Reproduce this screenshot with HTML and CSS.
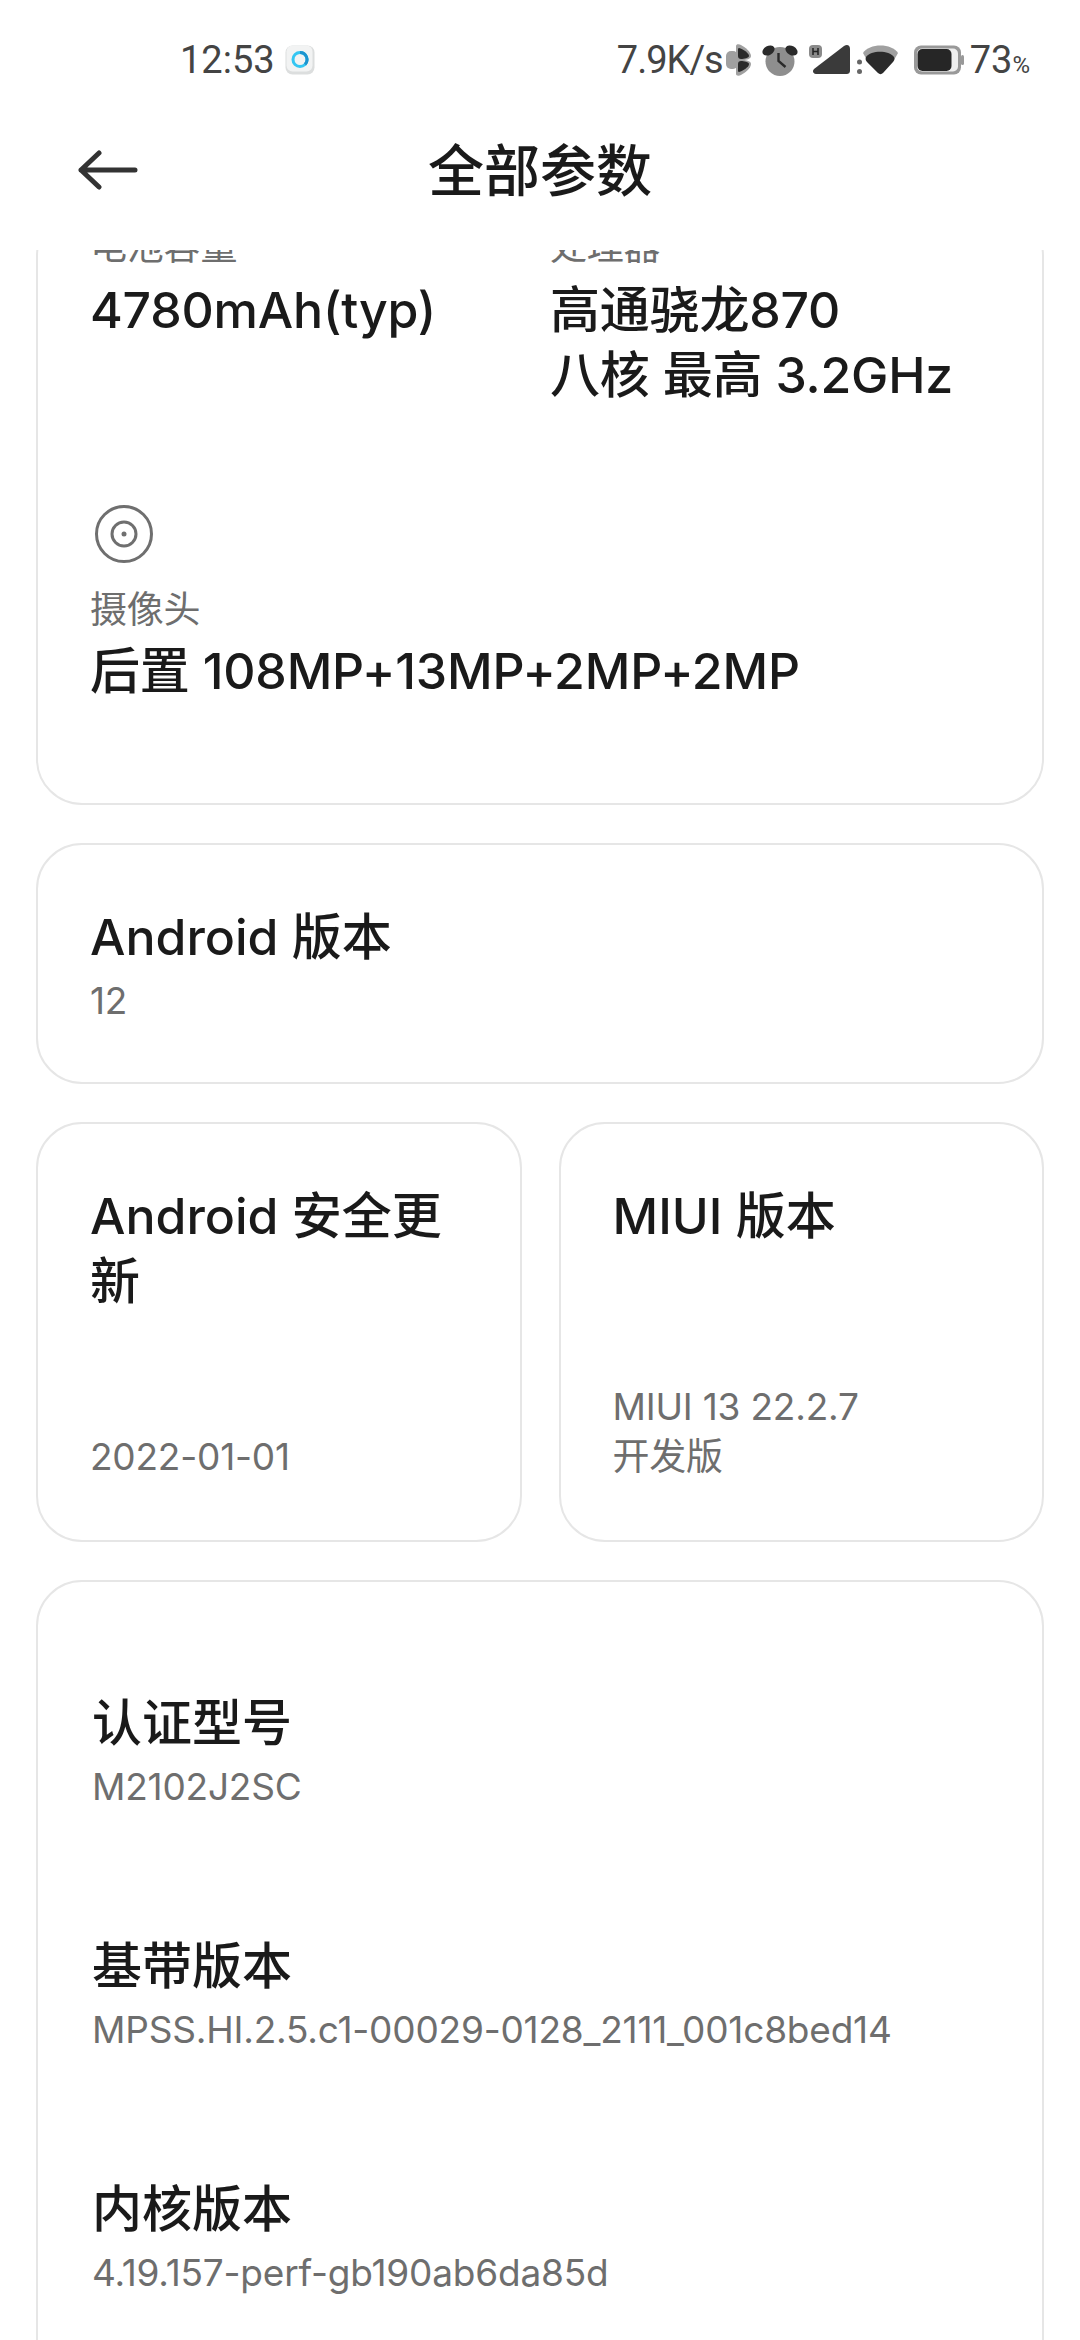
FILE: index.html
```html
<!DOCTYPE html>
<html lang="zh-CN">

<head>
    <meta charset="UTF-8">
    <meta name="viewport" content="width=device-width, initial-scale=1.0">
    <title>全部参数</title>
    <link rel="stylesheet" href="styles.css">
</head>

<body>
    <div class="status-bar">
        <div class="status-left">
            <span class="clock">12:53</span>
            <svg class="app-badge" width="30" height="30" viewBox="0 0 30 30">
                <rect x="0.500" y="0.500" width="29" height="29" rx="7" fill="#dcdede" />
                <rect x="1.500" y="0.500" width="26" height="26" rx="6" fill="#f2f3f3" />
                <circle cx="15" cy="14.500" r="7" fill="none" stroke="#35c6f2" stroke-width="3" />
                <path d="M15 7.500a7 7 0 0 1 5 11.900" fill="none" stroke="#1c94cf" stroke-width="3" />
            </svg>
        </div>
        <div class="status-right">
            <span class="speed">7.9K/s</span>
            <svg class="fan" width="25" height="32" viewBox="0 0 25 32">
                <rect x="0" y="7" width="12" height="18" rx="5" fill="#a0a0a0" />
                <path d="M10 2c0-2 3-2 5-1 4 2 10 7 10 11 0 3-5 4-8 4h-7z" fill="#a0a0a0" />
                <path d="M10 30c0 2 3 2 5 1 4-2 10-7 10-11 0-3-5-4-8-4h-7z" fill="#a0a0a0" />
                <path d="M13 4c4 1 10 5 10 8 0 2-5 3-8 3-2 0-3-1-3-3V6c0-1 0-2 1-2z" fill="#2a2a2a" />
                <path d="M13 28c4-1 10-5 10-8 0-2-5-3-8-3-2 0-3 1-3 3v6c0 1 0 2 1 2z" fill="#2a2a2a" />
            </svg>
            <svg class="alarm" width="36" height="32" viewBox="0 0 36 32">
                <circle cx="18" cy="17.500" r="14.500" fill="#8e8e8e" />
                <ellipse cx="6.500" cy="6.500" rx="6.500" ry="4.500" transform="rotate(-30 6.500 6.500)" fill="#2a2a2a" />
                <ellipse cx="29.500" cy="6.500" rx="6.500" ry="4.500" transform="rotate(30 29.500 6.500)" fill="#2a2a2a" />
                <path d="M16.500 9v8l7 6" fill="none" stroke="#2a2a2a" stroke-width="2.400" />
            </svg>
            <svg class="signal" width="41" height="30" viewBox="0 0 41 30">
                <rect x="0" y="0" width="13" height="13" rx="4" fill="#8a8a8a" />
                <path d="M4 3v7M9 3v7M4 6.500h5" stroke="#222" stroke-width="1.500" fill="none" />
                <path d="M7 29c-3 0-4-3-2-5L35 1c3-2 6-1 6 3v21c0 3-1 4-4 4z" fill="#3a3a3a" />
            </svg>
            <svg class="wifi" width="41" height="30" viewBox="0 0 41 30">
                <circle cx="2.500" cy="17" r="2.500" fill="#666" />
                <circle cx="2.500" cy="26.500" r="2.500" fill="#666" />
                <path d="M6 8C12-2 35-2 41 8l-4 7H10z" fill="#a0a0a0" />
                <path d="M9 12c5-7 23-7 28 0 1 2 0 4-1 5L26 28c-1.500 1.500-3.500 1.500-5 0L10 17c-1-1-2-3-1-5z" fill="#2a2a2a" />
            </svg>
            <svg class="battery" width="50" height="30" viewBox="0 0 50 30">
                <rect x="0" y="0.500" width="47" height="29" rx="7" fill="#999" />
                <rect x="3" y="3.500" width="41" height="23" rx="5" fill="#efefef" />
                <rect x="3.500" y="4" width="34" height="22" rx="5" fill="#262626" />
                <rect x="47" y="10" width="3" height="10" rx="1.500" fill="#999" />
            </svg>
            <span class="battery-text">73<small>%</small></span>
        </div>
    </div>

    <div class="title-bar">
        <svg class="back" width="60" height="44" viewBox="0 0 60 44">
            <path d="M3 22h54M21 5 3 22l18 17" fill="none" stroke="#333" stroke-width="5" stroke-linecap="round" stroke-linejoin="round" />
        </svg>
        <h1>全部参数</h1>
    </div>

    <div class="content">
        <div class="card spec-card">
            <div class="spec-grid">
                <div class="spec">
                    <div class="label">电池容量</div>
                    <div class="value">4780mAh(typ)</div>
                </div>
                <div class="spec">
                    <div class="label">处理器</div>
                    <div class="value">高通骁龙870<br>八核 最高 3.2GHz</div>
                </div>
                <div class="spec spec-wide">
                    <svg class="spec-icon" width="62" height="62" viewBox="0 0 62 62">
                        <circle cx="31" cy="31" r="27.500" fill="none" stroke="#6f6f6f" stroke-width="3" />
                        <circle cx="31" cy="31" r="12" fill="none" stroke="#6f6f6f" stroke-width="3" />
                        <circle cx="31" cy="31" r="2.500" fill="#6f6f6f" />
                    </svg>
                    <div class="label">摄像头</div>
                    <div class="value">后置 108MP+13MP+2MP+2MP</div>
                </div>
            </div>
        </div>

        <div class="card info-card">
            <div class="info-title">Android 版本</div>
            <div class="label">12</div>
        </div>

        <div class="card-pair">
            <div class="card info-card tall">
                <div class="info-title">Android 安全更新</div>
                <div class="label">2022-01-01</div>
            </div>
            <div class="card info-card tall">
                <div class="info-title">MIUI 版本</div>
                <div class="label">MIUI 13 22.2.7<br>开发版</div>
            </div>
        </div>

        <div class="card list-card">
            <div class="list-row">
                <div class="info-title">认证型号</div>
                <div class="label">M2102J2SC</div>
            </div>
            <div class="list-row">
                <div class="info-title">基带版本</div>
                <div class="label">MPSS.HI.2.5.c1-00029-0128_2111_001c8bed14</div>
            </div>
            <div class="list-row">
                <div class="info-title">内核版本</div>
                <div class="label">4.19.157-perf-gb190ab6da85d</div>
            </div>
        </div>
    </div>
</body>

</html>
```

FILE: styles.css
```css
* {
    margin: 0;
    padding: 0;
    box-sizing: border-box;
    font-family: Inter, 'Noto Sans CJK SC', sans-serif;
}

body {
    background-color: white;
    width: 1080px;
    height: 2340px;
    overflow: hidden;
    display: flex;
    flex-direction: column;
}

.status-bar {
    height: 120px;
    flex-shrink: 0;
    display: flex;
    justify-content: space-between;
    align-items: center;
    padding: 0 50px 0 180px;
    color: #444;
    font-size: 38px;
}

.status-bar span {
    font-family: Roboto, sans-serif;
}

.status-bar .speed {
    letter-spacing: -1px;
}

.status-left,
.status-right {
    display: flex;
    align-items: center;
}

.app-badge {
    margin-left: 10px;
}

.status-right svg {
    flex-shrink: 0;
}

.fan {
    margin-left: 3px;
}

.alarm,
.signal {
    margin-left: 11px;
}

.wifi {
    margin-left: 7px;
}

.battery {
    margin-left: 16px;
    margin-right: 6px;
}

.battery-text small {
    font-family: Roboto, sans-serif;
    font-size: 24px;
}

.title-bar {
    height: 130px;
    flex-shrink: 0;
    display: grid;
    grid-template-columns: 1fr auto 1fr;
    align-items: center;
    padding: 0 78px 30px;
}

.title-bar h1 {
    grid-column: 2;
    grid-row: 1;
    font-size: 56px;
    font-weight: 500;
    color: #1a1a1a;
    margin-bottom: 8px;
}

.back {
    grid-column: 1;
    grid-row: 1;
}

.content {
    flex: 1;
    overflow: hidden;
    padding: 0 36px;
    display: flex;
    flex-direction: column;
    gap: 38px;
}

.card {
    background-color: white;
    border: 2px solid #e6e6e6;
    border-radius: 46px;
    flex-shrink: 0;
}

.label {
    font-size: 37px;
    line-height: 50px;
    color: #6e6e6e;
    letter-spacing: -0.2px;
}

.value {
    font-size: 50px;
    line-height: 65px;
    color: #1a1a1a;
    font-weight: 500;
    letter-spacing: -0.2px;
    margin-top: 6px;
}

.spec-card {
    margin-top: -40px;
    height: 595px;
    padding: 10px 52px 0;
}

.spec-grid {
    display: grid;
    grid-template-columns: 460px 1fr;
}

.spec-wide {
    grid-column: 1 / 3;
    margin-top: 95px;
}

.spec-icon {
    display: block;
    margin: 0 0 20px 3px;
}

.spec-wide .value {
    margin-top: 4px;
}

.info-card {
    padding: 60px 52px 56px;
}

.info-title {
    font-size: 50px;
    line-height: 65px;
    color: #1a1a1a;
    font-weight: 500;
}

.info-card .label {
    margin-top: 6px;
}

.card-pair {
    display: grid;
    grid-template-columns: 1fr 1fr;
    gap: 37px;
    flex-shrink: 0;
}

.tall {
    height: 420px;
    display: flex;
    flex-direction: column;
    justify-content: space-between;
    padding-bottom: 58px;
}

.list-card {
    padding: 109px 54px 0;
    display: flex;
    flex-direction: column;
    gap: 122px;
    height: 900px;
}

.list-row .label {
    margin-top: 6px;
}
```
